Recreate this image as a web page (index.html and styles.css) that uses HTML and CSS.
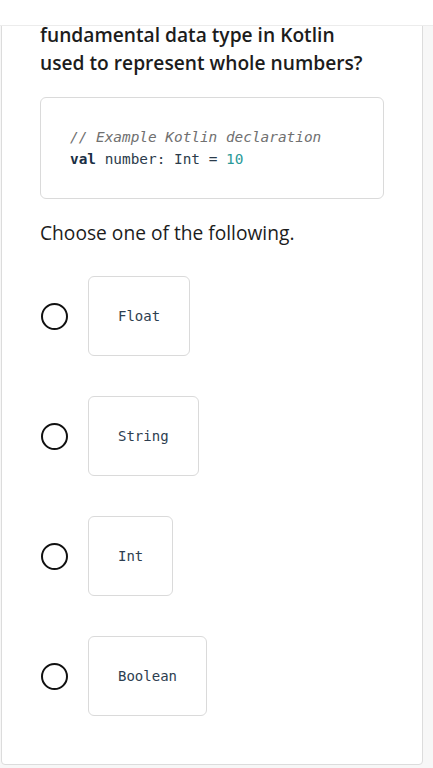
FILE: index.html
```html
<!DOCTYPE html>
<html lang="en">
<head>
  <meta charset="UTF-8">
  <meta name="viewport" content="width=device-width, initial-scale=1.0">
  <title>Kotlin Quiz</title>
  <link rel="stylesheet" href="styles.css">
</head>
<body>
  <header class="top-bar"></header>
  <main class="quiz-card">
    <h2 class="question">fundamental data type in Kotlin<br>used to represent whole numbers?</h2>
    <pre class="code-block"><span class="cm">// Example Kotlin declaration</span>
<span class="kw">val</span> number: Int = <span class="num">10</span></pre>
    <p class="prompt">Choose one of the following.</p>
    <div class="options">
      <label class="option">
        <span class="radio"></span>
        <span class="option-box">Float</span>
      </label>
      <label class="option">
        <span class="radio"></span>
        <span class="option-box">String</span>
      </label>
      <label class="option">
        <span class="radio"></span>
        <span class="option-box">Int</span>
      </label>
      <label class="option">
        <span class="radio"></span>
        <span class="option-box">Boolean</span>
      </label>
    </div>
  </main>
</body>
</html>
```
FILE: styles.css
```css
* {
  box-sizing: border-box;
}
body {
  margin: 0;
  font-family: 'Open Sans', 'Noto Sans', sans-serif;
  background: #f7f7f7;
  color: #1c1c1c;
  height: 768px;
  overflow: hidden;
}
.top-bar {
  position: fixed;
  top: 0;
  left: 0;
  right: 0;
  height: 26px;
  background: #fff;
  border-bottom: 1px solid #ececec;
  z-index: 2;
}
.quiz-card {
  margin-left: 1px;
  width: 422px;
  background: #fff;
  border: 1px solid #dcdcdc;
  border-radius: 0 0 4px 4px;
  padding: 20px 38px 48px 38px;
}
.question {
  margin: 0;
  font-size: 19.2px;
  font-weight: 600;
  line-height: 28px;
  color: #1c1c1c;
}
.code-block {
  margin: 20px 0 0;
  padding: 28px 29px 28px;
  border: 1px solid #dadada;
  border-radius: 6px;
  font-family: 'DejaVu Sans Mono', monospace;
  font-size: 14.4px;
  line-height: 22px;
  color: #2b3b4b;
}
.cm { color: #707070; font-style: italic; }
.kw { color: #1a2f44; font-weight: bold; }
.num { color: #2a9a98; }
.prompt {
  margin: 20px 0 0;
  font-size: 19.2px;
  line-height: 28px;
  color: #1c1c1c;
}
.options {
  margin-top: 29px;
  display: flex;
  flex-direction: column;
  gap: 40px;
}
.option {
  display: flex;
  align-items: center;
  gap: 20px;
}
.radio {
  width: 27px;
  height: 27px;
  margin-left: 1px;
  border: 2px solid #111;
  border-radius: 50%;
}
.option-box {
  padding: 30px 29px;
  border: 1px solid #dadada;
  border-radius: 6px;
  font-family: 'DejaVu Sans Mono', monospace;
  font-size: 14px;
  line-height: 18px;
  color: #2d3e50;
}
```
